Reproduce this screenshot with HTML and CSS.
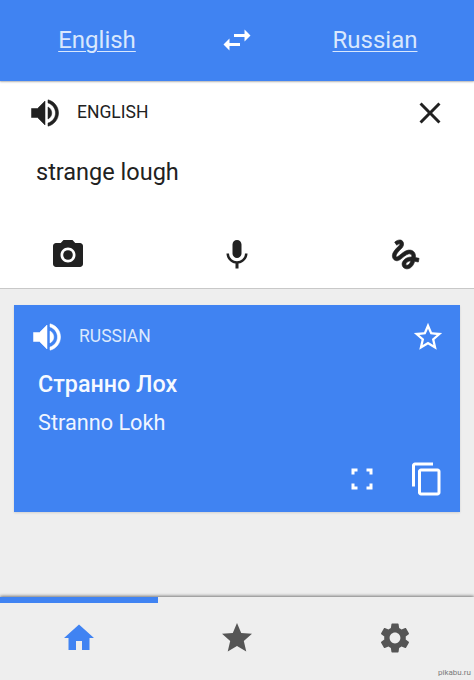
FILE: index.html
```html
<!DOCTYPE html>
<html lang="en">
<head>
  <meta charset="UTF-8" />
  <title>Translate</title>
  <link rel="stylesheet" href="styles.css">
</head>
<body>
  <div class="app">
    <!-- Language bar -->
    <div class="lang-bar">
      <a class="lang-link">English</a>
      <svg class="icon icon-swap" viewBox="0 0 24 24"><path d="M6.99 11L3 15l3.99 4v-3H14v-2H6.99v-3zM21 9l-3.99-4v3H10v2h7.01v3L21 9z"/></svg>
      <a class="lang-link lang-link-right">Russian</a>
    </div>

    <!-- Source text -->
    <div class="source">
      <div class="source-head">
        <svg class="icon icon-speaker" viewBox="0 0 24 24"><path d="M3 9v6h4l5 5V4L7 9H3zm13.5 3c0-1.77-1.02-3.29-2.5-4.03v8.05c1.48-.73 2.5-2.25 2.5-4.02zM14 3.23v2.06c2.89.86 5 3.54 5 6.71s-2.11 5.85-5 6.71v2.06c4.01-.91 7-4.49 7-8.77s-2.99-7.86-7-8.77z"/></svg>
        <span class="lang-label">ENGLISH</span>
        <svg class="icon icon-close" viewBox="0 0 24 24"><path d="M19 6.41L17.59 5 12 10.59 6.41 5 5 6.41 10.59 12 5 17.59 6.41 19 12 13.41 17.59 19 19 17.59 13.41 12z"/></svg>
      </div>
      <div class="source-text">strange lough</div>
      <div class="source-tools">
        <svg class="icon" viewBox="0 0 24 24"><circle cx="12" cy="12" r="3.2"/><path d="M9 2L7.17 4H4c-1.1 0-2 .9-2 2v12c0 1.1.9 2 2 2h16c1.1 0 2-.9 2-2V6c0-1.1-.9-2-2-2h-3.17L15 2H9zm3 15c-2.76 0-5-2.24-5-5s2.24-5 5-5 5 2.24 5 5-2.24 5-5 5z"/></svg>
        <svg class="icon" viewBox="0 0 24 24"><path d="M12 14c1.66 0 3-1.34 3-3V5c0-1.66-1.34-3-3-3S9 3.34 9 5v6c0 1.66 1.34 3 3 3zm5.3-3c0 3-2.54 5.1-5.3 5.1S6.7 14 6.7 11H5c0 3.41 2.72 6.23 6 6.72V21h2v-3.28c3.28-.48 6-3.3 6-6.72h-1.7z"/></svg>
        <svg class="icon icon-gesture" viewBox="0 0 24 24"><path d="M4.59 6.89c.7-.71 1.4-1.35 1.71-1.22.5.2 0 1.03-.3 1.52-.25.42-2.86 3.89-2.86 6.31 0 1.28.48 2.34 1.34 2.98.75.56 1.74.73 2.64.46 1.07-.31 1.95-1.4 3.06-2.77 1.21-1.49 2.83-3.44 4.08-3.44 1.63 0 1.65 1.01 1.76 1.79-3.78.64-5.38 3.67-5.38 5.37 0 1.7 1.44 3.09 3.21 3.09 1.63 0 4.29-1.33 4.69-6.1H21v-2.5h-2.47c-.15-1.65-1.09-4.2-4.03-4.2-2.25 0-4.18 1.91-4.94 2.84-.58.73-2.06 2.48-2.29 2.72-.25.3-.68.84-1.11.84-.45 0-.72-.83-.36-1.92.35-1.09 1.4-2.86 1.85-3.52.78-1.14 1.3-1.92 1.3-3.28C8.95 3.69 7.31 3 6.44 3 5.12 3 3.97 4 3.72 4.25c-.36.36-.66.66-.88.93l1.75 1.71zm9.29 11.66c-.31 0-.74-.26-.74-.72 0-.6.73-2.2 2.87-2.76-.3 2.69-1.43 3.48-2.13 3.48z"/></svg>
      </div>
    </div>

    <!-- Result card -->
    <div class="result">
      <div class="result-head">
        <svg class="icon icon-speaker" viewBox="0 0 24 24"><path d="M3 9v6h4l5 5V4L7 9H3zm13.5 3c0-1.77-1.02-3.29-2.5-4.03v8.05c1.48-.73 2.5-2.25 2.5-4.02zM14 3.23v2.06c2.89.86 5 3.54 5 6.71s-2.11 5.85-5 6.71v2.06c4.01-.91 7-4.49 7-8.77s-2.99-7.86-7-8.77z"/></svg>
        <span class="lang-label">RUSSIAN</span>
        <svg class="icon icon-star" viewBox="0 0 24 24"><path d="M22 9.24l-7.19-.62L12 2 9.19 8.63 2 9.24l5.46 4.73L5.82 21 12 17.27 18.18 21l-1.63-7.03L22 9.24zM12 15.4l-3.76 2.27 1-4.28-3.32-2.88 4.38-.38L12 6.1l1.71 4.04 4.38.38-3.32 2.88 1 4.28L12 15.4z"/></svg>
      </div>
      <div class="result-text">Странно Лох</div>
      <div class="result-translit">Stranno Lokh</div>
      <div class="result-tools">
        <svg class="icon" viewBox="0 0 24 24"><path d="M5 15v4h4v-2H7v-2H5zM5 9h2V7h2V5H5v4zM19 15h-2v2h-2v2h4v-4zM15 5v2h2v2h2V5h-4z"/></svg>
        <svg class="icon" viewBox="0 0 24 24"><path d="M16 1H4c-1.1 0-2 .9-2 2v14h2V3h12V1zm3 4H8c-1.1 0-2 .9-2 2v14c0 1.1.9 2 2 2h11c1.1 0 2-.9 2-2V7c0-1.1-.9-2-2-2zm0 16H8V7h11v14z"/></svg>
      </div>
    </div>

    <!-- Tab bar -->
    <div class="tab-bar">
      <div class="tab-progress"></div>
      <div class="tabs">
        <svg class="icon tab-active" viewBox="0 0 24 24"><path d="M10 20v-6h4v6h5v-8h3L12 3 2 12h3v8z"/></svg>
        <svg class="icon" viewBox="0 0 24 24"><path d="M12 17.27L18.18 21l-1.64-7.03L22 9.24l-7.19-.61L12 2 9.19 8.63 2 9.24l5.46 4.73L5.82 21z"/></svg>
        <svg class="icon" viewBox="0 0 24 24"><path d="M19.14 12.94c.04-.3.06-.61.06-.94 0-.32-.02-.64-.07-.94l2.03-1.58c.18-.14.23-.41.12-.61l-1.92-3.32c-.12-.22-.37-.29-.59-.22l-2.39.96c-.5-.38-1.03-.7-1.62-.94l-.36-2.54c-.04-.24-.24-.41-.48-.41h-3.84c-.24 0-.43.17-.47.41l-.36 2.54c-.59.24-1.13.57-1.62.94l-2.39-.96c-.22-.08-.47 0-.59.22L2.74 8.87c-.12.21-.08.47.12.61l2.03 1.58c-.05.3-.09.63-.09.94s.02.64.07.94l-2.03 1.58c-.18.14-.23.41-.12.61l1.92 3.32c.12.22.37.29.59.22l2.39-.96c.5.38 1.03.7 1.62.94l.36 2.54c.05.24.24.41.48.41h3.84c.24 0 .44-.17.47-.41l.36-2.54c.59-.24 1.13-.56 1.62-.94l2.39.96c.22.08.47 0 .59-.22l1.92-3.32c.12-.22.07-.47-.12-.61l-2.01-1.58zM12 15.6c-1.98 0-3.6-1.62-3.6-3.6s1.62-3.6 3.6-3.6 3.6 1.62 3.6 3.6-1.62 3.6-3.6 3.6z"/></svg>
      </div>
    </div>

    <span class="watermark">pikabu.ru</span>
  </div>
</body>
</html>
```

FILE: styles.css
```css
:root {
  --blue: #4083f2;
  --bg: #eeeeee;
  --dark: #212121;
  --grey: #555555;
}

html, body {
  margin: 0;
  padding: 0;
  background: var(--bg);
}

body {
  font-family: Roboto, "Noto Sans", sans-serif;
  color: var(--dark);
}

.app {
  position: relative;
  width: 474px;
  height: 680px;
  display: flex;
  flex-direction: column;
  overflow: hidden;
}

.icon {
  width: 36px;
  height: 36px;
  fill: currentColor;
  flex: none;
  display: block;
}

.icon-speaker {
  stroke: currentColor;
  stroke-width: 0.35;
}

.icon-gesture {
  transform: rotate(12deg);
  stroke: currentColor;
  stroke-width: 0.4;
}

/* Language bar */
.lang-bar {
  height: 81px;
  box-sizing: border-box;
  padding-bottom: 2px;
  background: var(--blue);
  color: #fff;
  display: grid;
  grid-template-columns: 194px 86px 194px;
  align-items: center;
  justify-items: center;
  box-shadow: 0 1px 2px rgba(0, 0, 0, 0.25);
  position: relative;
}

.lang-link {
  font-size: 24px;
  color: #d9e8fd;
  text-decoration: underline;
  text-decoration-thickness: 1px;
  text-underline-offset: 3px;
}

.lang-link-right {
  margin-right: 4px;
}

/* Source panel */
.source {
  height: 206px;
  background: #fff;
  border-bottom: 1px solid #c8c8c8;
  margin-top: 1px;
  display: flex;
  flex-direction: column;
}

.source-head {
  display: flex;
  align-items: center;
  height: 36px;
  margin-top: 13px;
  padding: 0 26px 0 27px;
}

.lang-label {
  font-size: 17.5px;
  margin-left: 14px;
  margin-bottom: 2px;
  flex: 1;
}

.source-text {
  font-size: 23.5px;
  line-height: 32px;
  margin: 25px 0 0 36px;
}

.source-tools {
  display: flex;
  justify-content: space-between;
  margin-top: 49px;
  padding: 0 50px;
}

/* Result card */
.result {
  height: 207px;
  margin: 16px 14px 0;
  box-sizing: border-box;
  padding-top: 14px;
  background: var(--blue);
  color: #fff;
  box-shadow: 0 1px 2px rgba(0, 0, 0, 0.12);
}

.result-head {
  display: flex;
  align-items: center;
  height: 36px;
  padding: 0 15px;
}

.result-head .lang-label {
  color: #dce9fd;
  margin-left: 14px;
}

.icon-star {
  width: 34px;
  height: 34px;
}

.result-text {
  font-size: 23.3px;
  font-weight: 500;
  line-height: 30px;
  color: #f6f9ff;
  margin: 14px 0 0 24px;
}

.result-translit {
  font-size: 21.7px;
  line-height: 28px;
  color: #f0f5ff;
  margin: 10px 0 0 24px;
}

.result-tools {
  display: flex;
  justify-content: flex-end;
  gap: 29px;
  margin-top: 24px;
  padding-right: 15px;
}

/* Tab bar */
.tab-bar {
  margin-top: auto;
  height: 83px;
  background: var(--bg);
  box-shadow: 0 -1px 3px rgba(0, 0, 0, 0.5);
  display: flex;
  flex-direction: column;
}

.tab-progress {
  width: 158px;
  height: 6px;
  background: var(--blue);
}

.tabs {
  display: grid;
  grid-template-columns: repeat(3, 1fr);
  justify-items: center;
  padding-top: 17px;
  color: var(--grey);
}

.tab-active {
  color: var(--blue);
}

.watermark {
  position: absolute;
  right: 3px;
  bottom: 3px;
  font-size: 8px;
  color: #7a7a7a;
}
```
